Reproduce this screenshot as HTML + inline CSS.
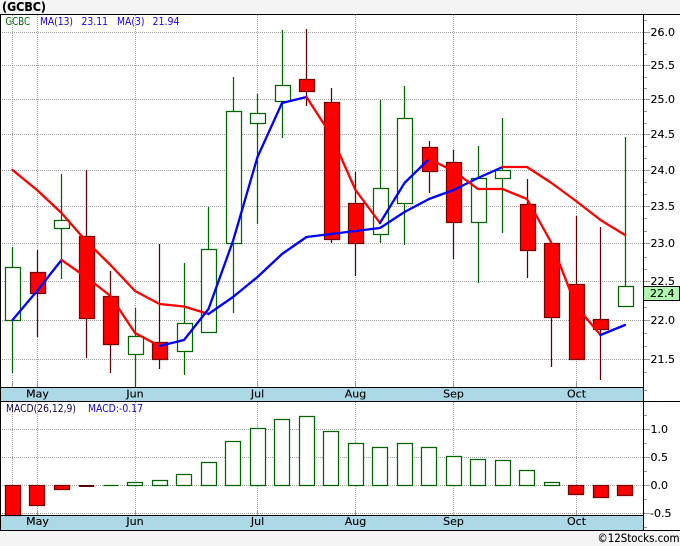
<!DOCTYPE html>
<html><head><meta charset="utf-8"><style>
html,body{margin:0;padding:0;background:#f4f4f4;width:680px;height:546px;overflow:hidden}
svg{display:block}
text{font-family:"DejaVu Sans","Liberation Sans",sans-serif;font-size:11px;fill:#000;stroke:#000;stroke-width:.12}
.c{shape-rendering:crispEdges}
.g{stroke:#006400;stroke-width:1.25;fill:none}
.gb{stroke:#006400;stroke-width:1.25;fill:#fff}
.r{stroke:#5c0000;stroke-width:1.25;fill:none}
.rb{stroke:#7a0000;stroke-width:1.25;fill:#f00}
</style></head><body>
<svg width="680" height="546" viewBox="0 0 680 546" xmlns="http://www.w3.org/2000/svg">
<rect width="680" height="546" fill="#f4f4f4"/>
<rect x="0" y="14" width="680" height="517" fill="#fff"/>
<rect x="1" y="388" width="642" height="13" fill="#add8e6"/>
<rect x="1" y="516" width="642" height="14" fill="#add8e6"/>
<g class="c">
<path d="M0 32.5H650M0 65.5H650M0 99.5H650M0 134.5H650M0 170.5H650M0 206.5H650M0 243.5H650M0 281.5H650M0 320.5H650M0 359.5H650M0 429.5H650M0 457.5H650M0 485.5H650M0 513.5H650" stroke="#a0a0a0" stroke-width="1" stroke-dasharray="1 1" fill="none"/>
<path d="M12.5 15V387M37.5 15V387M135.5 15V387M257.5 15V387M355.5 15V387M453.5 15V387M576.5 15V387M12.5 402V515M37.5 402V515M135.5 402V515M257.5 402V515M355.5 402V515M453.5 402V515M576.5 402V515" stroke="#a0a0a0" stroke-width="1" stroke-dasharray="1 1" fill="none"/>
<path d="M12.5 381V387M37.5 381V387M135.5 381V387M257.5 381V387M355.5 381V387M453.5 381V387M576.5 381V387M37.5 510V515M135.5 510V515M257.5 510V515M355.5 510V515M576.5 510V515" stroke="#999" fill="none"/>
<path d="M643 20.5H647M643 32.5H650M643 43.5H647M643 54.5H647M643 65.5H650M643 77.5H647M643 88.5H647M643 99.5H650M643 111.5H647M643 123.5H647M643 134.5H650M643 146.5H647M643 158.5H647M643 170.5H650M643 182.5H647M643 194.5H647M643 206.5H650M643 218.5H647M643 231.5H647M643 243.5H650M643 257.5H647M643 269.5H647M643 281.5H650M643 307.5H647M643 320.5H650M643 333.5H647M643 346.5H647M643 359.5H650M643 372.5H647M643 390.5H647M643 415.5H647M643 429.5H650M643 443.5H647M643 457.5H650M643 471.5H647M643 485.5H650M643 499.5H647M643 513.5H650M643 527.5H647" stroke="#999" fill="none"/>
</g>
<g>
<path class="g" d="M12.5 247V373M61.5 174V279M135.5 308V387M184.5 263V375M208.5 207V332M233.5 77V313M257.5 94V224M282.5 30V138M380.5 100V243M404.5 86V245M478.5 146V283M502.5 118V233M625.5 137V286"/>
<path class="r" d="M37.5 250V337M86.5 170V358M110.5 271V373M159.5 244V369M306.5 29V106M331.5 88V243M355.5 172V276M429.5 141V193M453.5 150V259M527.5 179V278M551.5 243V367M576.5 216V359M600.5 227V380"/>

<rect class="gb" x="5.5" y="267.5" width="15" height="53"/>
<rect class="rb" x="30.5" y="272.5" width="15" height="21"/>
<rect class="gb" x="54.5" y="220.5" width="15" height="8"/>
<rect class="rb" x="79.5" y="236.5" width="15" height="82"/>
<rect class="rb" x="103.5" y="296.5" width="15" height="48"/>
<rect class="gb" x="128.5" y="336.5" width="15" height="18"/>
<rect class="rb" x="152.5" y="342.5" width="15" height="17"/>
<rect class="gb" x="177.5" y="323.5" width="15" height="28"/>
<rect class="gb" x="201.5" y="249.5" width="15" height="83"/>
<rect class="gb" x="226.5" y="111.5" width="15" height="132"/>
<rect class="gb" x="250.5" y="113.5" width="15" height="10"/>
<rect class="gb" x="275.5" y="85.5" width="15" height="16"/>
<rect class="rb" x="299.5" y="79.5" width="15" height="12"/>
<rect class="rb" x="324.5" y="102.5" width="15" height="137"/>
<rect class="rb" x="348.5" y="203.5" width="15" height="40"/>
<rect class="gb" x="373.5" y="188.5" width="15" height="46"/>
<rect class="gb" x="397.5" y="118.5" width="15" height="85"/>
<rect class="rb" x="422.5" y="147.5" width="15" height="24"/>
<rect class="rb" x="446.5" y="162.5" width="15" height="60"/>
<rect class="gb" x="471.5" y="178.5" width="15" height="44"/>
<rect class="gb" x="495.5" y="170.5" width="15" height="8"/>
<rect class="rb" x="520.5" y="204.5" width="15" height="46"/>
<rect class="rb" x="544.5" y="243.5" width="15" height="74"/>
<rect class="rb" x="569.5" y="284.5" width="15" height="75"/>
<rect class="rb" x="593.5" y="319.5" width="15" height="10"/>
<rect class="gb" x="618.5" y="286.5" width="15" height="20"/>

<rect class="rb" x="5.5" y="485.5" width="15" height="30"/>
<rect class="rb" x="29.5" y="485.5" width="15" height="20"/>
<rect class="rb" x="54.5" y="485.5" width="15" height="4"/>
<rect x="79" y="485" width="15" height="2" fill="#5c0000"/>
<path class="g" d="M103.5 485.5H118.5"/>
<rect class="gb" x="127.5" y="482.5" width="15" height="3"/>
<rect class="gb" x="152.5" y="480.5" width="15" height="5"/>
<rect class="gb" x="176.5" y="474.5" width="15" height="11"/>
<rect class="gb" x="201.5" y="462.5" width="15" height="23"/>
<rect class="gb" x="225.5" y="441.5" width="15" height="44"/>
<rect class="gb" x="250.5" y="428.5" width="15" height="57"/>
<rect class="gb" x="274.5" y="419.5" width="15" height="66"/>
<rect class="gb" x="299.5" y="416.5" width="15" height="69"/>
<rect class="gb" x="323.5" y="431.5" width="15" height="54"/>
<rect class="gb" x="348.5" y="443.5" width="15" height="42"/>
<rect class="gb" x="372.5" y="447.5" width="15" height="38"/>
<rect class="gb" x="397.5" y="443.5" width="15" height="42"/>
<rect class="gb" x="421.5" y="447.5" width="15" height="38"/>
<rect class="gb" x="446.5" y="456.5" width="15" height="29"/>
<rect class="gb" x="470.5" y="459.5" width="15" height="26"/>
<rect class="gb" x="495.5" y="460.5" width="15" height="25"/>
<rect class="gb" x="519.5" y="470.5" width="15" height="15"/>
<rect class="gb" x="544.5" y="482.5" width="15" height="3"/>
<rect class="rb" x="568.5" y="485.5" width="15" height="9"/>
<rect class="rb" x="593.5" y="485.5" width="15" height="12"/>
<rect class="rb" x="617.5" y="485.5" width="15" height="10"/>
</g>

<g fill="none" stroke-width="2.3" stroke-linejoin="round" stroke-linecap="round">
<polyline stroke="#ff0000" points="12.5,170 37,190 61.5,213 86,241 110.5,265 135,291 159.5,304 184,306.5 208.5,314"/>
<polyline stroke="#0000ff" points="208.5,314 233,297 257.5,277 282,254 306.5,237 331,234 355.5,231 380,228 404.5,212 429,199 453.5,190 478,178 502.5,167"/>
<polyline stroke="#ff0000" points="502.5,167 527,167 551.5,183 576,201 600.5,220 625,235"/>
<polyline stroke="#0000ff" points="12.5,320 37,291 61.5,260"/>
<polyline stroke="#ff0000" points="61.5,260 86,277 110.5,296 135,333 159.5,346"/>
<polyline stroke="#0000ff" points="159.5,346 184,340 208.5,309 233,241 257.5,157 282,103 306.5,97"/>
<polyline stroke="#ff0000" points="306.5,97 331,135 355.5,190 380,223"/>
<polyline stroke="#0000ff" points="380,223 404.5,183 429,159"/>
<polyline stroke="#ff0000" points="429,159 453.5,171 478,189 502.5,189 527,199 551.5,243 576,306 600.5,335"/>
<polyline stroke="#0000ff" points="600.5,335 625,325"/>
</g>

<g class="c" stroke="#000" fill="none">
<path d="M0 14.5H680M0.5 14V530M643.5 14V530M1 387.5H643M0 401.5H680M1 515.5H643M0 530.5H680"/>
</g>
<rect class="c" x="643.5" y="286.5" width="36" height="14" fill="#b0f8b0" stroke="#000"/>

<text x="2" y="11" style="font-weight:bold;font-size:12px" textLength="44" lengthAdjust="spacingAndGlyphs">(GCBC)</text>
<text x="5.5" y="25" style="font-size:10.5px;fill:#006400;stroke:none" textLength="24.5" lengthAdjust="spacingAndGlyphs">GCBC</text>
<text x="40" y="25" style="font-size:10.5px;fill:#1a00e0;stroke:none" textLength="33" lengthAdjust="spacingAndGlyphs">MA(13)</text>
<text x="81.5" y="25" style="font-size:10.5px;fill:#1a00e0;stroke:none" textLength="26.5" lengthAdjust="spacingAndGlyphs">23.11</text>
<text x="117" y="25" style="font-size:10.5px;fill:#1a00e0;stroke:none" textLength="27.5" lengthAdjust="spacingAndGlyphs">MA(3)</text>
<text x="152.5" y="25" style="font-size:10.5px;fill:#1a00e0;stroke:none" textLength="27" lengthAdjust="spacingAndGlyphs">21.94</text>

<text x="6" y="412" style="font-size:10.5px;fill:#1a0040;stroke:none" textLength="70" lengthAdjust="spacingAndGlyphs">MACD(26,12,9)</text>
<text x="88" y="412" style="font-size:10.5px;fill:#1a00e0;stroke:none" textLength="55" lengthAdjust="spacingAndGlyphs">MACD:-0.17</text>

<g text-anchor="start">
<text x="650.5" y="36">26.0</text>
<text x="650.5" y="69">25.5</text>
<text x="650.5" y="103">25.0</text>
<text x="650.5" y="138">24.5</text>
<text x="650.5" y="174">24.0</text>
<text x="650.5" y="210">23.5</text>
<text x="650.5" y="247">23.0</text>
<text x="650.5" y="285">22.5</text>
<text x="650" y="297">22.4</text>
<text x="650.5" y="324">22.0</text>
<text x="650.5" y="363">21.5</text>
<text x="650.5" y="433">1.0</text>
<text x="650.5" y="461">0.5</text>
<text x="650.5" y="489">0.0</text>
<text x="650" y="517">-0.5</text>
</g>
<g text-anchor="middle">
<text x="37.5" y="397.5">May</text><text x="135" y="397.5">Jun</text><text x="257.5" y="397.5">Jul</text><text x="355.5" y="397.5">Aug</text><text x="453.5" y="397.5">Sep</text><text x="576.5" y="397.5">Oct</text>
<text x="37.5" y="525">May</text><text x="135" y="525">Jun</text><text x="257.5" y="525">Jul</text><text x="355.5" y="525">Aug</text><text x="453.5" y="525">Sep</text><text x="576.5" y="525">Oct</text>
</g>
<text x="597.5" y="542" style="font-size:11.5px" textLength="82" lengthAdjust="spacingAndGlyphs">©12Stocks.com</text>
</svg>
</body></html>
